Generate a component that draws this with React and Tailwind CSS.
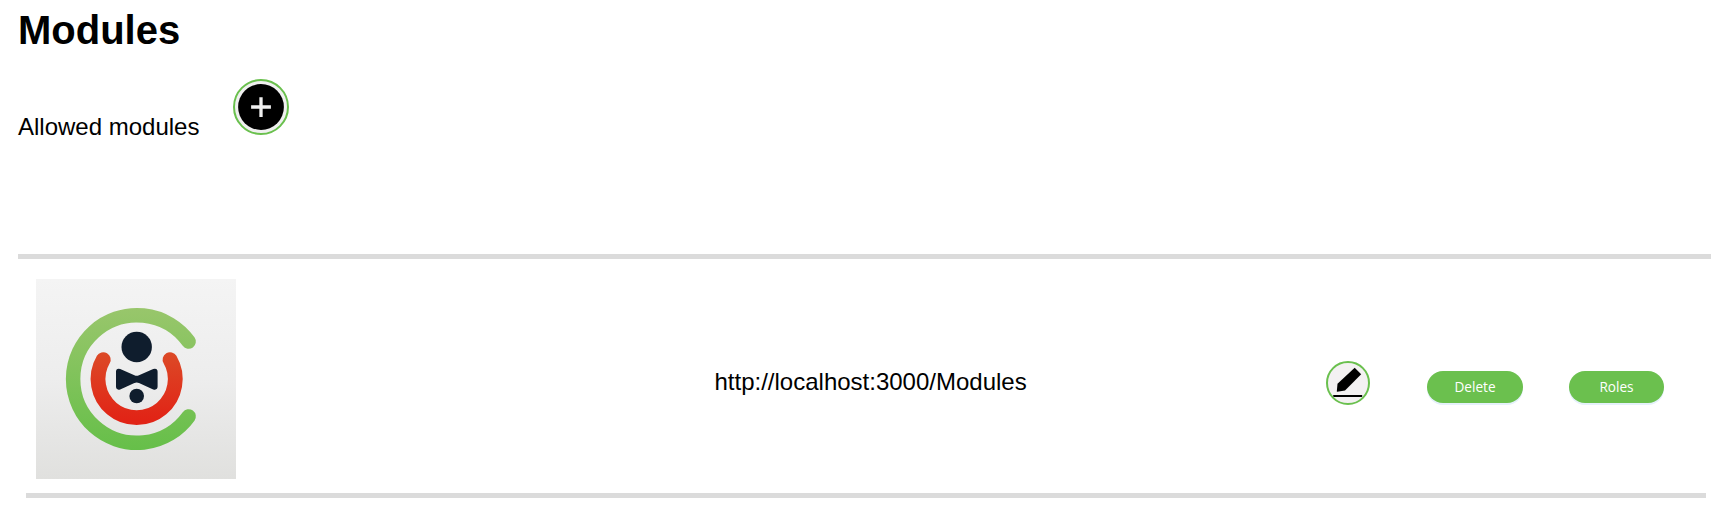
function Logo() {
  return (
    <svg className="block size-[200px] shrink-0" viewBox="0 0 200 200" fill="none">
      <defs>
        <linearGradient id="tile" x1="0" y1="0" x2="0" y2="200" gradientUnits="userSpaceOnUse">
          <stop stopColor="#f4f4f4" />
          <stop offset=".5" stopColor="#ededed" />
          <stop offset="1" stopColor="#e0e0de" />
        </linearGradient>
        <linearGradient id="green" x1="0" y1="30" x2="0" y2="171" gradientUnits="userSpaceOnUse">
          <stop stopColor="#98c66b" />
          <stop offset="1" stopColor="#66bf49" />
        </linearGradient>
        <linearGradient id="red" x1="0" y1="73" x2="0" y2="140" gradientUnits="userSpaceOnUse">
          <stop stopColor="#dc4a27" />
          <stop offset="1" stopColor="#e12416" />
        </linearGradient>
      </defs>
      <rect width="200" height="200" fill="url(#tile)" />
      <path d="M152.6 62.6A63.8 63.8 0 1 0 152.6 137.4" stroke="url(#green)" strokeWidth="14.5" strokeLinecap="round" />
      <path d="M67.3 80.6A38.6 38.6 0 1 0 134 80.6" stroke="url(#red)" strokeWidth="14.8" strokeLinecap="round" />
      <g fill="#0f1d2d">
        <circle cx="100.7" cy="68" r="15.2" />
        <circle cx="100.7" cy="117" r="7.3" />
        <path d="M84.2 89.9L98.4 96.2Q100.7 97.2 103 96.2L117.2 89.9Q121.6 88.8 121.6 92.7V107.6Q121.6 111.5 117.2 110.4L103 104.1Q100.7 103.1 98.4 104.1L84.2 110.4Q80 111.5 80 107.6V92.7Q80 88.8 84.2 89.9Z" />
      </g>
    </svg>
  );
}

function AddButton() {
  return (
    <button aria-label="Add module" className="ml-[34px] size-14 shrink-0 rounded-full border-2 border-[#6ac04e] bg-[#f0f0f0]">
      <svg className="block size-[52px]" viewBox="0 0 52 52">
        <circle cx="26" cy="26" r="22.9" />
        <path d="M26 16.2V36M16.1 26H35.9" stroke="#f0f0f0" strokeWidth="3.3" />
      </svg>
    </button>
  );
}

function EditButton() {
  return (
    <button aria-label="Edit module" className="size-11 shrink-0 overflow-hidden rounded-full border-2 border-[#6ac04e] bg-[#f3f1f2]">
      <svg className="block size-10" viewBox="0 0 40 40">
        <path d="M26.7 4.8L33.2 11.2L17 27.6L9.2 28.8L8.8 28.4L9.5 20.8Z" />
        <path d="M5.2 32H34.2V34H5.2Z" />
      </svg>
    </button>
  );
}

const pill =
  "h-8 shrink-0 rounded-full bg-[#6bc04e] pb-px font-['Open_Sans',sans-serif] text-[13.6px] leading-[30px] text-white shadow-[0_2px_0_#e5f1fb]";

export default function App() {
  return (
    <main className="h-[509px] overflow-hidden bg-white pl-[18px] font-['Liberation_Sans',Arial,sans-serif] text-2xl text-black">
      <h1 className="pt-[7px] text-[40px] leading-[46px] font-bold">Modules</h1>
      <div className="mt-[26px] flex h-14 w-fit">
        <p className="mt-[34px] w-[181px] leading-7 whitespace-nowrap">Allowed modules</p>
        <AddButton />
      </div>
      <section className="mt-[119px] w-[1693px] border-t-[5px] border-[#dbdbdb]">
        <div className="ml-2 flex h-[239px] w-[1680px] items-start border-b-[5px] border-[#dbdbdb] pt-5 pl-2.5">
          <Logo />
          <p className="mt-[89px] ml-[478.5px] w-[611.5px] leading-7">http://localhost:3000/Modules</p>
          <div className="mt-[82px] flex items-start">
            <EditButton />
            <button className={`${pill} mt-2.5 ml-[57px] w-24`}>Delete</button>
            <button className={`${pill} mt-2.5 ml-[46px] w-[95px]`}>Roles</button>
          </div>
        </div>
      </section>
    </main>
  );
}
